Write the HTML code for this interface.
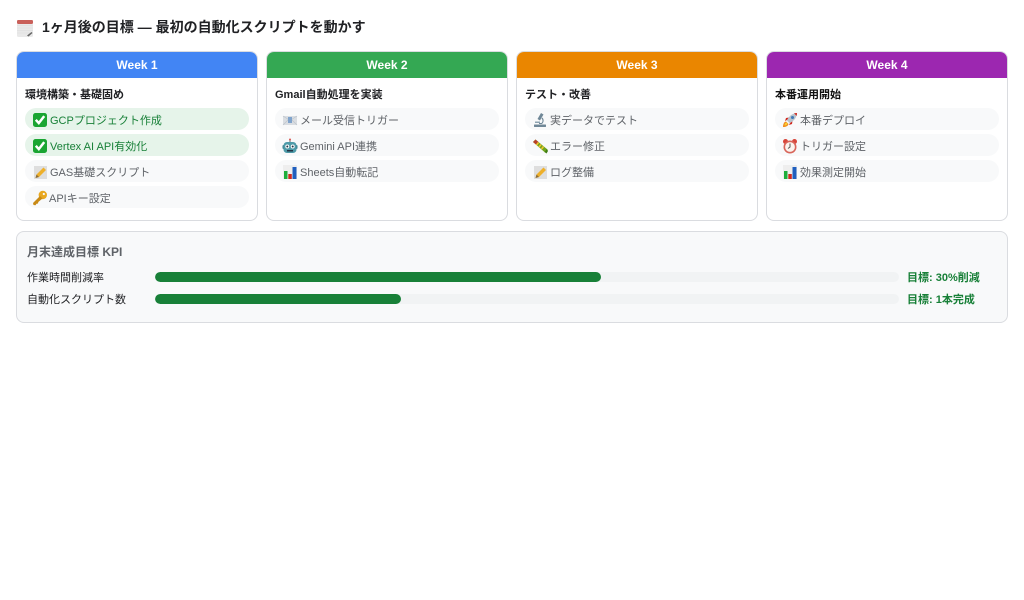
<!DOCTYPE html>
<html lang="ja">
<head>
<meta charset="utf-8">
<title>1ヶ月後の目標</title>
<style>
*{box-sizing:border-box;margin:0;padding:0}
html,body{width:1024px;height:600px;background:#fff;overflow:hidden}
body{position:relative;font-family:"Liberation Sans","Noto Sans CJK JP",sans-serif;color:#202124}
.abs{position:absolute;white-space:nowrap}
.title{left:42px;top:17px;font-size:14px;line-height:20px;font-weight:700;color:#202124}
.card{position:absolute;top:51px;width:242px;height:170px;background:#fff;border:1px solid #dadce0;border-radius:8px;overflow:hidden}
.head{height:27px;margin:-1px -1px 0;line-height:28px;text-align:center;color:#fff;font-size:12px;font-weight:700}
.sub{position:absolute;left:8px;top:35px;font-size:11px;line-height:16px;font-weight:700;color:#202124;white-space:nowrap}
.pill{position:absolute;left:8px;width:224px;height:22px;border-radius:11px;background:#f8f9fa;color:#5f6368;font-size:11px;line-height:22px;white-space:nowrap}
.pill.done{background:#e6f4ea;color:#188038}
.pill span{position:absolute;left:25px;top:2px}
.pill svg{position:absolute;left:7px;top:4px;width:16px;height:16px}
.p1{top:56px}.p2{top:82px}.p3{top:108px}.p4{top:134px}
.kpi{position:absolute;left:16px;top:231px;width:992px;height:92px;background:#f8f9fa;border:1px solid #dadce0;border-radius:8px}
.kpi-title{left:27px;top:243px;font-size:12px;line-height:18px;font-weight:700;color:#5f6368}
.label{left:27px;font-size:11px;line-height:16px;color:#202124}
.track{position:absolute;left:155px;width:744px;height:10px;border-radius:5px;background:#f1f3f4;overflow:hidden}
.fill{height:10px;border-radius:5px;background:#188038}
.goal{left:907px;font-size:11px;line-height:16px;font-weight:700;color:#188038}
</style>
</head>
<body>
<svg class="abs" style="left:16px;top:19px" width="18" height="18" viewBox="0 0 18 18"><rect x="1" y="1" width="16" height="17" rx="1.500" fill="#e9e9e9"/><rect x="1" y="1" width="16" height="4" rx="1.200" fill="#c9605a"/><path d="M1 6.500h16M1 9h16M1 11.500h16M1 14h16" stroke="#dcdcdc" stroke-width=".5"/><path d="M11 16.500l4.500-3.500 1 1L12.500 17.500z" fill="#666"/></svg>
<div class="abs title">1ヶ月後の目標 — 最初の自動化スクリプトを動かす</div>

<div class="card" style="left:16px">
<div class="head" style="background:#4285f4">Week 1</div>
<div class="sub">環境構築・基礎固め</div>
<div class="pill done p1"><svg viewBox="0 0 16 16"><rect x="1" y="1" width="14" height="14" rx="2.500" fill="#1aa532"/><path d="M3.800 7.800l3 3.300 5.400-7" fill="none" stroke="#fff" stroke-width="2.500"/></svg><span>GCPプロジェクト作成</span></div>
<div class="pill done p2"><svg viewBox="0 0 16 16"><rect x="1" y="1" width="14" height="14" rx="2.500" fill="#1aa532"/><path d="M3.800 7.800l3 3.300 5.400-7" fill="none" stroke="#fff" stroke-width="2.500"/></svg><span>Vertex AI API有効化</span></div>
<div class="pill p3"><svg viewBox="0 0 16 16"><rect x="2" y="2" width="13" height="13" fill="#dedede"/><path d="M3.500 14l1-3.500 7-7 2.500 2.500-7 7z" fill="#eeb02a"/><path d="M3.500 14l1-3.500 2.500 2.500z" fill="#8a6d3b"/></svg><span>GAS基礎スクリプト</span></div>
<div class="pill p4"><svg viewBox="0 0 16 16"><circle cx="10.800" cy="5" r="4.200" fill="#e8a820"/><circle cx="11.800" cy="4" r="1.100" fill="#f8f9fa"/><path d="M8 6L1 13l.5 2 2 .3 1-1.500 1.500-.3.300-1.500L10.500 8.500z" fill="#c88a16"/></svg><span style="left:24px">APIキー設定</span></div>
</div>

<div class="card" style="left:266px">
<div class="head" style="background:#34a853">Week 2</div>
<div class="sub">Gmail自動処理を実装</div>
<div class="pill p1"><svg viewBox="0 0 16 16"><rect x="1" y="4" width="14" height="9" fill="#d9dde2"/><path d="M1 4l7 4.500L15 4M1 13l5-5M15 13l-5-5" fill="none" stroke="#bcc3cb" stroke-width=".7"/><rect x="6" y="5" width="4" height="6" fill="#7fa3cc"/></svg><span>メール受信トリガー</span></div>
<div class="pill p2"><svg viewBox="0 0 16 16"><rect x="7.500" y="1" width="1" height="3" fill="#666"/><circle cx="8" cy="1.500" r="1" fill="#d9534f"/><rect x="0.500" y="7" width="2" height="4" rx="1" fill="#3b7f8c"/><rect x="13.500" y="7" width="2" height="4" rx="1" fill="#3b7f8c"/><rect x="1.500" y="4" width="13" height="11" rx="3.500" fill="#4d9aa8"/><circle cx="5.300" cy="8.500" r="2" fill="#fff"/><circle cx="10.700" cy="8.500" r="2" fill="#fff"/><circle cx="5.300" cy="8.500" r="1" fill="#234"/><circle cx="10.700" cy="8.500" r="1" fill="#234"/><rect x="5" y="12" width="6" height="1.500" fill="#234"/></svg><span>Gemini API連携</span></div>
<div class="pill p3"><svg viewBox="0 0 16 16"><rect x="1" y="1" width="14" height="14" fill="#eeeeee"/><rect x="2" y="7" width="3.500" height="8" fill="#1eae3c"/><rect x="6.300" y="10" width="3.500" height="5" fill="#d0291f"/><rect x="10.500" y="3" width="4" height="12" fill="#1f5fbf"/></svg><span>Sheets自動転記</span></div>
</div>

<div class="card" style="left:516px">
<div class="head" style="background:#ea8600">Week 3</div>
<div class="sub">テスト・改善</div>
<div class="pill p1"><svg viewBox="0 0 16 16"><path d="M9 1l2.500 1.500-3.500 6-2.500-1.500z" fill="#6f8797"/><path d="M10.500 5.500A4.500 4.500 0 0 1 10 12H7v-1h2.500a3 3 0 0 0 0-4.500z" fill="#6f8797"/><rect x="3" y="9.500" width="5" height="1.500" fill="#8da2b0"/><rect x="2" y="12.500" width="12" height="2.500" rx=".5" fill="#6f8797"/></svg><span>実データでテスト</span></div>
<div class="pill p2"><svg viewBox="0 0 16 16"><path d="M1 4l2.500-2.500L15.500 11.500 13 14.500z" fill="#6fa51e"/><path d="M1 4l2.500-2.500 3 2.500L4 6.500z" fill="#b8402a"/><path d="M6.500 4.500L4.500 7M9 6.500L7 9M11.500 8.500l-2 2.500" stroke="#f2c230" stroke-width="1.600"/><path d="M12.500 14l2.500-3 1 2-1.500 2.500z" fill="#3f7d12"/></svg><span>エラー修正</span></div>
<div class="pill p3"><svg viewBox="0 0 16 16"><rect x="2" y="2" width="13" height="13" fill="#dedede"/><path d="M3.500 14l1-3.500 7-7 2.500 2.500-7 7z" fill="#eeb02a"/><path d="M3.500 14l1-3.500 2.500 2.500z" fill="#8a6d3b"/></svg><span>ログ整備</span></div>
</div>

<div class="card" style="left:766px">
<div class="head" style="background:#9c27b0">Week 4</div>
<div class="sub" style="color:#111">本番運用開始</div>
<div class="pill p1"><svg viewBox="0 0 16 16"><path d="M1 15c0-3 1-5 3-5.500L6.500 12C6 14 4 15 1 15z" fill="#f08a1d"/><path d="M2.500 13.500c0-1.500.5-2.500 2-3l1 1c-.5 1.500-1.500 2-3 2z" fill="#f8d030"/><path d="M5 8L3 9l1-3 3-.5zM8 11l-1 2 3-1 .5-3z" fill="#d0291f"/><path d="M5 8.500C7 4 10 1.500 15 1c-.5 5-3 8-7.500 10z" fill="#b7c2cc"/><circle cx="10.500" cy="5.500" r="1.500" fill="#3f78b5"/><path d="M12 1.300L15 1l-.3 3z" fill="#d0291f"/></svg><span>本番デプロイ</span></div>
<div class="pill p2"><svg viewBox="0 0 16 16"><circle cx="3.500" cy="3.500" r="2.500" fill="#d8453a"/><circle cx="12.500" cy="3.500" r="2.500" fill="#d8453a"/><circle cx="8" cy="9" r="6.500" fill="#d8655a"/><circle cx="8" cy="9" r="4.900" fill="#fbf3ee"/><path d="M8 5.500V9l-2 1.500" fill="none" stroke="#555" stroke-width="1"/></svg><span>トリガー設定</span></div>
<div class="pill p3"><svg viewBox="0 0 16 16"><rect x="1" y="1" width="14" height="14" fill="#eeeeee"/><rect x="2" y="7" width="3.500" height="8" fill="#1eae3c"/><rect x="6.300" y="10" width="3.500" height="5" fill="#d0291f"/><rect x="10.500" y="3" width="4" height="12" fill="#1f5fbf"/></svg><span>効果測定開始</span></div>
</div>

<div class="kpi"></div>
<div class="abs kpi-title">月末達成目標 KPI</div>
<div class="abs label" style="top:270px">作業時間削減率</div>
<div class="track" style="top:272px"><div class="fill" style="width:446px"></div></div>
<div class="abs goal" style="top:270px">目標: 30%削減</div>
<div class="abs label" style="top:292px">自動化スクリプト数</div>
<div class="track" style="top:294px"><div class="fill" style="width:246px"></div></div>
<div class="abs goal" style="top:292px">目標: 1本完成</div>
</body>
</html>
